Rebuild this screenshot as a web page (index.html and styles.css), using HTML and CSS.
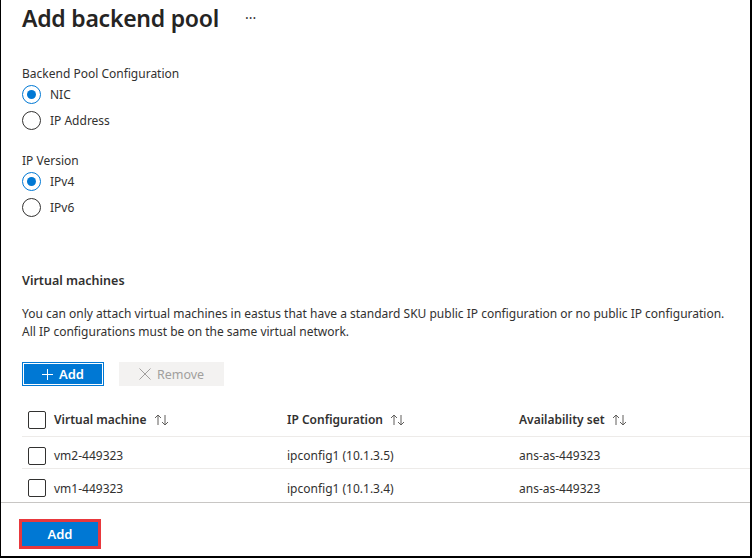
FILE: index.html
```html
<!DOCTYPE html>
<html>
<head>
<meta charset="utf-8">
<link rel="stylesheet" href="styles.css">
</head>
<body>
<div class="frame">
  <div class="head">
    <h1 class="title">Add backend pool</h1>
    <span class="more">···</span>
  </div>

  <div class="group g1">
    <div class="glabel">Backend Pool Configuration</div>
    <div class="radio"><span class="circle on"></span><span>NIC</span></div>
    <div class="radio"><span class="circle"></span><span>IP Address</span></div>
  </div>

  <div class="group g2">
    <div class="glabel">IP Version</div>
    <div class="radio"><span class="circle on"></span><span>IPv4</span></div>
    <div class="radio"><span class="circle"></span><span>IPv6</span></div>
  </div>

  <h2 class="section">Virtual machines</h2>
  <p class="desc">You can only attach virtual machines in eastus that have a standard SKU public IP configuration or no public IP configuration.<br>All IP configurations must be on the same virtual network.</p>

  <div class="toolbar">
    <button class="btn-add"><svg width="11" height="11" viewBox="0 0 11 11"><path d="M5.5 0v11M0 5.5h11" stroke="#fff" stroke-width="1"/></svg><span>Add</span></button>
    <button class="btn-remove"><svg width="12" height="12" viewBox="0 0 12 12"><path d="M0.5 0.5l11 11M11.5 0.5l-11 11" stroke="#a19f9d" stroke-width="1"/></svg><span>Remove</span></button>
  </div>

  <div class="table">
    <div class="row hdr">
      <span class="cb"></span>
      <span class="cell">Virtual machine <svg class="sort" width="16" height="12" viewBox="0 0 16 12"><path d="M4 11V1M1 4l3-3 3 3M11 1v10M8 8l3 3 3-3" fill="none" stroke="#605e5c" stroke-width="1"/></svg></span>
      <span class="cell">IP Configuration <svg class="sort" width="16" height="12" viewBox="0 0 16 12"><path d="M4 11V1M1 4l3-3 3 3M11 1v10M8 8l3 3 3-3" fill="none" stroke="#605e5c" stroke-width="1"/></svg></span>
      <span class="cell">Availability set <svg class="sort" width="16" height="12" viewBox="0 0 16 12"><path d="M4 11V1M1 4l3-3 3 3M11 1v10M8 8l3 3 3-3" fill="none" stroke="#605e5c" stroke-width="1"/></svg></span>
    </div>
    <div class="row">
      <span class="cb"></span>
      <span class="cell">vm2-449323</span>
      <span class="cell">ipconfig1 (10.1.3.5)</span>
      <span class="cell">ans-as-449323</span>
    </div>
    <div class="row last">
      <span class="cb"></span>
      <span class="cell">vm1-449323</span>
      <span class="cell">ipconfig1 (10.1.3.4)</span>
      <span class="cell">ans-as-449323</span>
    </div>
  </div>

  <div class="footer">
    <div class="highlight"><button class="btn-primary">Add</button></div>
  </div>
</div>
</body>
</html>
```
FILE: styles.css
```css
* { box-sizing: border-box; }
html, body { margin: 0; padding: 0; background: #fff; }
body {
  font-family: "Noto Sans", "Open Sans", sans-serif;
  font-size: 12px;
  color: #323130;
}
.frame {
  width: 752px;
  height: 558px;
  border-left: 1px solid #000;
  border-right: 2px solid #000;
  border-bottom: 2px solid #000;
  overflow: hidden;
  display: flex;
  flex-direction: column;
}
.head {
  display: flex;
  align-items: center;
  padding: 2px 0 0 21px;
  height: 34px;
  flex: none;
}
.title {
  margin: 0;
  font-size: 23px;
  font-weight: 600;
  line-height: 32px;
  letter-spacing: -0.25px;
  color: #252423;
}
.more {
  margin-left: 26px;
  font-size: 14px;
  line-height: 32px;
  color: #323130;
}
.group { padding-left: 21px; flex: none; }
.g1 { margin-top: 30px; }
.g2 { margin-top: 18px; }
.glabel { height: 20px; line-height: 20px; }
.radio {
  display: flex;
  align-items: center;
  height: 26px;
  gap: 9px;
}
.glabel + .radio { margin-top: -3px; }
.circle {
  width: 19px;
  height: 19px;
  border-radius: 50%;
  border: 1px solid #323130;
  display: flex;
  align-items: center;
  justify-content: center;
  flex: none;
}
.circle.on { border-color: #0078d4; }
.circle.on::after {
  content: "";
  width: 9px;
  height: 9px;
  border-radius: 50%;
  background: #0078d4;
}
.section {
  margin: 51px 0 0 21px;
  font-size: 12.5px;
  font-weight: 600;
  line-height: 20px;
  flex: none;
}
.desc {
  margin: 14px 0 0 21px;
  line-height: 18px;
  flex: none;
}
.toolbar {
  display: flex;
  gap: 15px;
  margin: 21px 0 0 21px;
  height: 24px;
  flex: none;
}
.toolbar button {
  font-family: inherit;
  display: flex;
  align-items: center;
  justify-content: center;
  gap: 6px;
  height: 24px;
  padding: 0;
}
.btn-add {
  width: 82px;
  background: #0078d4;
  border: 1px solid #0078d4;
  outline: 1px solid #fff;
  outline-offset: -2px;
  color: #fff;
  font-weight: 600;
  font-size: 13px;
}
.btn-remove {
  width: 105px;
  background: #f3f2f1;
  border: none;
  color: #a19f9d;
  font-size: 12.5px;
}
.table { margin: 17px 0 0 21px; flex: none; }
.row {
  display: grid;
  grid-template-columns: 26px 233px 232px 1fr;
  align-items: center;
  padding: 6px 0 0 6px;
  height: 32px;
  border-bottom: 1px solid #edebe9;
}
.row.hdr { height: 34px; padding-top: 0; font-weight: 600; }
.row.last { border-bottom: none; }
.cell { display: flex; align-items: center; white-space: nowrap; }
.sort { margin-left: 7px; }
.cb {
  width: 18px;
  height: 18px;
  border: 1px solid #323130;
  border-radius: 2px;
}
.footer {
  margin-top: 1px;
  border-top: 1px solid #c8c6c4;
  padding: 16px 0 0 18px;
  flex: none;
}
.highlight {
  display: inline-block;
  border: 3px solid #e8383d;
}
.btn-primary {
  display: block;
  width: 76px;
  height: 24px;
  background: #0078d4;
  border: none;
  color: #fff;
  font-family: inherit;
  font-weight: 600;
  font-size: 13px;
  padding: 0;
}
```
